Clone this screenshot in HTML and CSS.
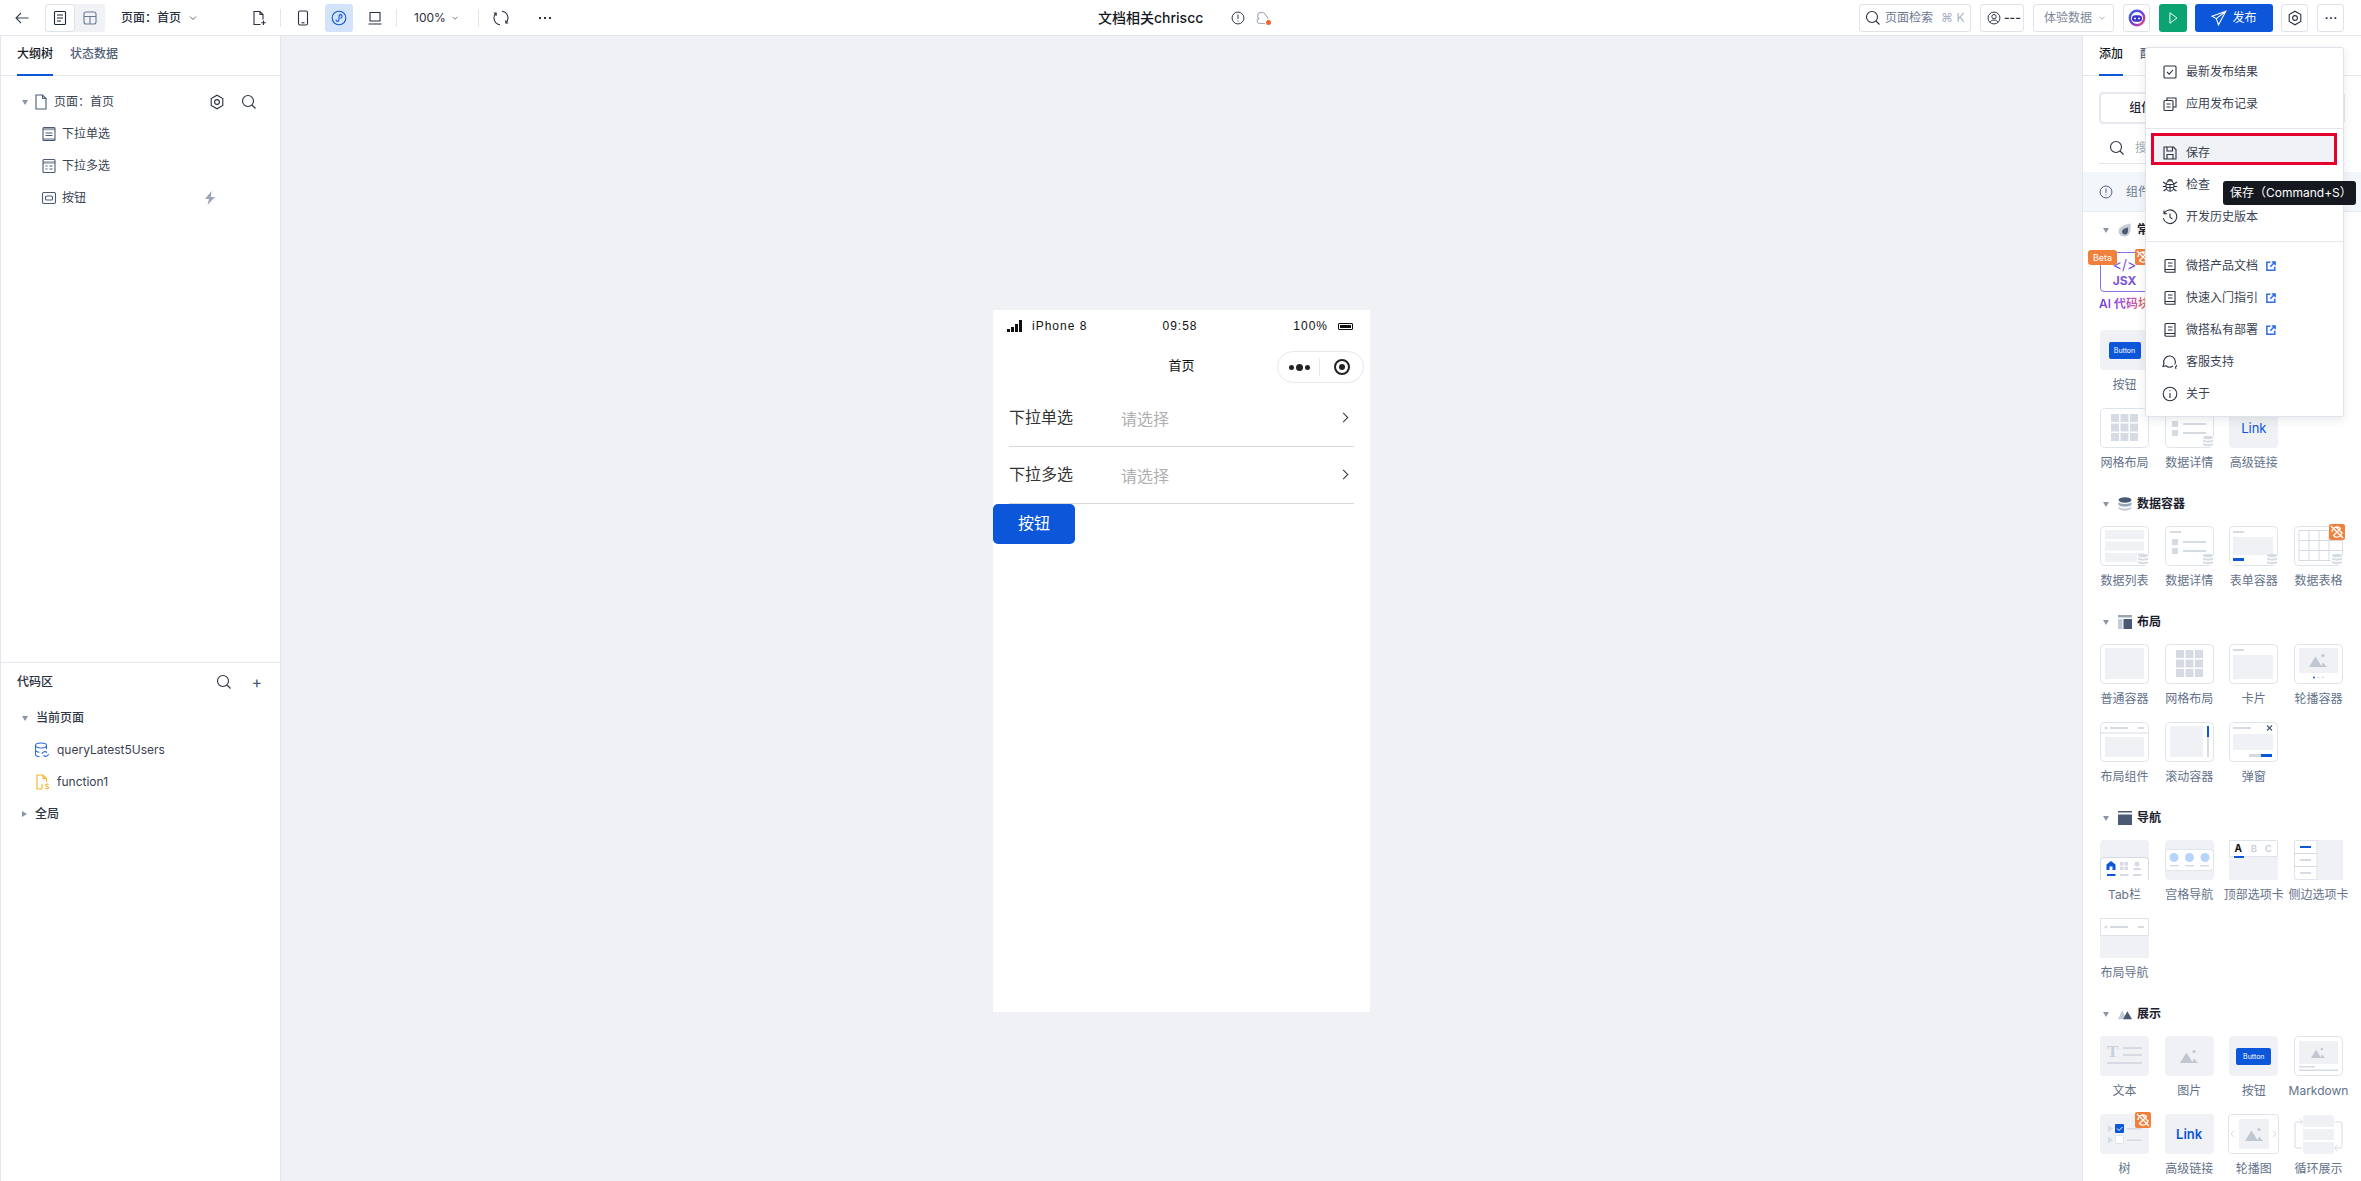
FILE: index.html
```html
<!DOCTYPE html>
<html lang="zh-CN">
<head>
<meta charset="utf-8">
<title>微搭编辑器</title>
<link rel="stylesheet" href="styles.css">
</head>
<body>
<svg class="defs" aria-hidden="true">
  <defs>
    <linearGradient id="ai-ring" x1="0" y1="0" x2="1" y2="1"><stop offset="0" stop-color="#2f62e6"/><stop offset=".55" stop-color="#7a3fe0"/><stop offset="1" stop-color="#e8476a"/></linearGradient>
    <symbol id="i-search" viewBox="0 0 16 16"><circle cx="7" cy="7" r="5.500"/><path d="M11 11l3.500 3.500"/></symbol>
    <symbol id="i-chev" viewBox="0 0 16 16"><path d="M4 6l4 4 4-4"/></symbol>
    <symbol id="i-back" viewBox="0 0 16 16"><path d="M14.500 8H2M7 3L2 8l5 5"/></symbol>
    <symbol id="i-outline" viewBox="0 0 16 16"><rect x="2.500" y="1.500" width="11" height="13" rx="1"/><path d="M5 5h6M5 8h6M5 11h4"/></symbol>
    <symbol id="i-layout" viewBox="0 0 16 16"><rect x="2" y="2" width="12" height="12" rx="2"/><path d="M2 6.500h12M8 6.500V14"/></symbol>
    <symbol id="i-newfile" viewBox="0 0 16 16"><path d="M9.500 14.500H3v-13h6l3 3v5M9 1.500v3h3M12.500 10.500v4.500M10.300 12.800h4.500"/></symbol>
    <symbol id="i-phone" viewBox="0 0 16 16"><rect x="3.500" y="1" width="9" height="14" rx="1.500"/><path d="M6.500 12.800h3"/></symbol>
    <symbol id="i-mini" viewBox="0 0 16 16"><circle cx="8" cy="8" r="6.800"/><path d="M5 9.500c0 2.500 3 2.500 3 0v-3c0-2.500 3-2.500 3 0 0 1.300-1 1.800-1.800 1.800"/></symbol>
    <symbol id="i-laptop" viewBox="0 0 16 16"><path d="M3 2.500h10v8.500H3zM1.500 14h13"/></symbol>
    <symbol id="i-refresh" viewBox="0 0 16 16"><path d="M9 1.300A6.800 6.800 0 0 1 12.800 13M7 14.700A6.800 6.800 0 0 1 3.200 3M12.800 10.300V13h2.500M3.200 5.700V3H.7"/></symbol>
    <symbol id="i-dots" viewBox="0 0 16 16"><path class="fill" d="M2 7h2v2H2zM7 7h2v2H7zM12 7h2v2h-2z"/></symbol>
    <symbol id="i-gear" viewBox="0 0 16 16"><path d="M8 1.200l5.800 3.300v7L8 14.800l-5.800-3.300v-7z"/><circle cx="8" cy="8" r="2.400"/></symbol>
    <symbol id="i-file" viewBox="0 0 16 16"><path d="M3 1h6.500L13 4.500V15H3zM9.500 1v3.500H13"/></symbol>
    <symbol id="i-select" viewBox="0 0 16 16"><rect x="2" y="1.500" width="12" height="13" rx="1"/><path class="thick" d="M2 3h12M2 13.500h12"/><path d="M4.500 7h7M4.500 9.500h7"/></symbol>
    <symbol id="i-multi" viewBox="0 0 16 16"><rect x="2" y="1.500" width="12" height="13" rx="1"/><path class="thick" d="M2 4.500h12"/><path d="M4.500 8h2M8.500 8h3M4.500 11h2M8.500 11h3"/></symbol>
    <symbol id="i-btn" viewBox="0 0 16 16"><rect x="1.500" y="2.500" width="13" height="11" rx="1.500"/><rect x="4.500" y="6" width="7" height="4" rx="1"/></symbol>
    <symbol id="i-bolt" viewBox="0 0 16 16"><path class="fill" d="M9.500 1L3 9h4l-1.500 6L13 7H8.800z"/></symbol>
    <symbol id="i-info" viewBox="0 0 16 16"><circle cx="8" cy="8" r="6.800"/><path d="M8 4v5M8 10.800v1"/></symbol>
    <symbol id="i-about" viewBox="0 0 16 16"><circle cx="8" cy="8" r="6.800"/><path d="M8 7v5M8 4.200v1"/></symbol>
    <symbol id="i-check" viewBox="0 0 16 16"><rect x="2" y="2" width="12" height="12" rx="1"/><path d="M5 8l2.200 2.200L11 6"/></symbol>
    <symbol id="i-copy" viewBox="0 0 16 16"><path d="M5 4.500V2h9v9h-3"/><rect x="2" y="4.500" width="9" height="10" rx="1"/><path d="M4.500 8h4M4.500 11h4"/></symbol>
    <symbol id="i-save" viewBox="0 0 16 16"><path d="M2 2h9.500L14 4.500V14H2zM5 2v4h5.500V2M5 14V9.500h6V14"/></symbol>
    <symbol id="i-bug" viewBox="0 0 16 16"><ellipse cx="8" cy="9" rx="4" ry="5.300"/><path d="M5.500 4.500C6 2 10 2 10.500 4.500M1 5l3 2M15 5l-3 2M.8 9.500h3.200M15.200 9.500H12M1.500 14l3-2M14.500 14l-3-2M4.500 7.500h7M4.500 10.500h7M8 7.500v6.500"/></symbol>
    <symbol id="i-history" viewBox="0 0 16 16"><path d="M2 4.500A6.800 6.800 0 1 1 1.300 9M2 1.500v3.200h3.200M8 4.500V8.300l2.500 1.800"/></symbol>
    <symbol id="i-book" viewBox="0 0 16 16"><path d="M3 14V2.500A1 1 0 0 1 4 1.500h9v10H4.300A1.300 1.300 0 0 0 3 13a1.300 1.300 0 0 0 1.300 1.300H13V11.500M6 5h4.500M6 8h4.500"/></symbol>
    <symbol id="i-ext" viewBox="0 0 16 16"><path d="M7 3H2.500v10.500H13V9M7 9l6-6M9 2.500h4.500V7"/></symbol>
    <symbol id="i-chat" viewBox="0 0 16 16"><path d="M12.700 10.500A5.800 5.800 0 1 0 2 9.500L1 12.500l3-.7a5.800 5.800 0 0 0 7 .2"/><path d="M14.500 11c0 1-.5 1.800-1 2.300l.5 1.500"/></symbol>
    <symbol id="i-send" viewBox="0 0 16 16"><path d="M14.800 1.200L1 6.200l4.300 2.400L7.500 14.800zM14.800 1.200L5.300 8.600"/></symbol>
    <symbol id="i-play" viewBox="0 0 16 16"><path d="M4.500 2l8 6-8 6z"/></symbol>
    <symbol id="i-user" viewBox="0 0 16 16"><circle cx="8" cy="8" r="6.800"/><circle cx="8" cy="6.500" r="2.500"/><path d="M3.500 13c1-3.500 8-3.500 9 0"/></symbol>
    <symbol id="i-cloud" viewBox="0 0 16 16"><path d="M9 13.500H3.500a2.500 2.500 0 0 1-.6-4.900A3.500 3.500 0 0 1 6 2.500a3.500 3.500 0 0 1 3.500 2.200c.6 1 2 2.700 2.800 4"/></symbol>
    <symbol id="i-ai" viewBox="0 0 18 18"><circle cx="9" cy="9" r="7.200" fill="none" stroke="url(#ai-ring)" stroke-width="2.400"/><rect x="4" y="6.200" width="10" height="6.600" rx="3.300" fill="#3b2fd0"/><circle cx="7" cy="9.500" r="1" fill="#fff"/><circle cx="11" cy="9.500" r="1" fill="#fff"/></symbol>

    <symbol id="s-drop" viewBox="0 0 14 14"><path fill="#c5ccd6" d="M12.500 .5C13 6 13 13.500 6.500 13.500 2.500 13.500.5 10.500.5 8 .5 4 7 1.500 12.500.5z"/><path fill="#4a5a75" d="M10 4.500c.3 3.500 0 7-3 7-2 0-3-1.500-3-3 0-2 3-3.300 6-4z"/></symbol>
    <symbol id="s-db" viewBox="0 0 14 14"><ellipse fill="#4a5a75" cx="7" cy="3" rx="6.500" ry="2.800"/><path fill="#9aa5b6" d="M.5 5c1 2.500 12 2.500 13 0v2.500c-1 3-12 3-13 0z"/><path fill="#c5ccd6" d="M.5 9.500c1 2.500 12 2.500 13 0v1.500c-1 3.500-12 3.500-13 0z"/></symbol>
    <symbol id="s-lay" viewBox="0 0 14 14"><path fill="#9aa5b6" d="M0 0h14v2.500H0z"/><path fill="#c5ccd6" d="M0 4h4.500v10H0z"/><path fill="#4a5a75" d="M5.500 4H14v10H5.500z"/></symbol>
    <symbol id="s-nav" viewBox="0 0 14 14"><path fill="#4a5a75" d="M0 0h14v1.500H0zM0 3.500h14V14H0z"/></symbol>
    <symbol id="s-show" viewBox="0 0 15 14"><path fill="#c5ccd6" d="M0 12.500L4.500 3l4.500 9.500z"/><path fill="#4a5a75" d="M5.500 12.500L10 4l5 8.500z"/></symbol>

    <symbol id="d-badge" viewBox="0 0 12 12"><path class="w" d="M0 2h12v10H0z"/><ellipse class="m" cx="6" cy="2.500" rx="5" ry="1.800"/><path class="m" d="M1 4.500c1.500 1.500 8.500 1.500 10 0v2c-1.500 1.500-8.500 1.500-10 0zM1 8c1.500 1.500 8.500 1.500 10 0v2c-1.500 1.500-8.500 1.500-10 0z"/></symbol>
    <symbol id="d-mtn" viewBox="0 0 18 14"><path class="mt" d="M0 14L6.500 3.500 13 14zM12 14l2-4.500 4 4.500z"/><circle class="mt" cx="14" cy="2.500" r="1.600"/></symbol>
    <symbol id="d-link" viewBox="0 0 16 16"><rect width="16" height="16" rx="2" fill="#f0803c"/><path d="M3 8a5 5 0 0 1 8-4M13 8a5 5 0 0 1-8 4M2 2l12 12M4 12l8-8M7 3l6 6" fill="none" stroke="#fff" stroke-width="1.300"/></symbol>

    <symbol id="t-grid" viewBox="0 0 49 40"><rect class="o" x=".5" y=".5" width="48" height="39" rx="4"/><path class="m" d="M11 6h8v8h-8zM20.500 6h8v8h-8zM30 6h8v8h-8zM11 15.500h8v8h-8zM20.500 15.500h8v8h-8zM30 15.500h8v8h-8zM11 25h8v8h-8zM20.500 25h8v8h-8zM30 25h8v8h-8z"/></symbol>
    <symbol id="t-detail" viewBox="0 0 49 40"><rect class="o" x=".5" y=".5" width="48" height="39" rx="4"/><path class="m" d="M5 5h11v2H5zM7 13h6v6H7zM7 22h6v6H7zM18 15h23v2H18zM18 24h23v2H18z"/><use href="#d-badge" x="37" y="27" width="12" height="12"/></symbol>
    <symbol id="t-list" viewBox="0 0 49 40"><rect class="o" x=".5" y=".5" width="48" height="39" rx="4"/><path class="g" d="M5 4h39v9H5zM5 15.500h39v9H5zM5 27h39v9H5z"/><use href="#d-badge" x="37" y="27" width="12" height="12"/></symbol>
    <symbol id="t-form" viewBox="0 0 49 40"><rect class="o" x=".5" y=".5" width="48" height="39" rx="4"/><path class="m" d="M4 5h11v2H4z"/><path class="g" d="M4 11h40v18H4z"/><path class="b" d="M4 32h11v3H4z"/><use href="#d-badge" x="37" y="27" width="12" height="12"/></symbol>
    <symbol id="t-table" viewBox="0 0 49 40"><rect class="o" x=".5" y=".5" width="48" height="39" rx="4"/><path class="l" d="M5 4.500h44v30H5zM5 14.500h44M5 24.500h44M15 4.500v30M25 4.500v30M35 4.500v30"/><use href="#d-badge" x="37" y="27" width="12" height="12"/></symbol>
    <symbol id="t-box" viewBox="0 0 49 40"><rect class="o" x=".5" y=".5" width="48" height="39" rx="4"/><path class="g" d="M5 4h39v31H5z"/></symbol>
    <symbol id="t-card" viewBox="0 0 49 40"><rect class="o" x=".5" y=".5" width="48" height="39" rx="4"/><path class="m" d="M4 5h11v2H4z"/><path class="g" d="M4 11h40v24H4z"/></symbol>
    <symbol id="t-swiper" viewBox="0 0 49 40"><rect class="o" x=".5" y=".5" width="48" height="39" rx="4"/><path class="g" d="M5 4h39v25H5z"/><use href="#d-mtn" x="15" y="9" width="18" height="14"/><circle class="b" cx="20" cy="33.500" r="1"/><circle class="m" cx="24.500" cy="33.500" r="1"/><circle class="m" cx="29" cy="33.500" r="1"/></symbol>
    <symbol id="t-bar" viewBox="0 0 49 40"><rect class="o" x=".5" y=".5" width="48" height="39" rx="4"/><path class="l" d="M.5 11h48"/><circle class="m" cx="6" cy="6" r="1.500"/><path class="m" d="M10 5h18v2H10zM38 5h6v2h-6z"/><path class="g" d="M5 15h39v20H5z"/></symbol>
    <symbol id="t-scroll" viewBox="0 0 49 40"><rect class="o" x=".5" y=".5" width="48" height="39" rx="4"/><path class="g" d="M5 4h33v31H5z"/><path class="m" d="M42 15h2v20h-2z"/><path class="b" d="M42 4h2v11h-2z"/></symbol>
    <symbol id="t-modal" viewBox="0 0 49 40"><rect class="o" x=".5" y=".5" width="48" height="39" rx="4"/><path class="m" d="M4 5h18v2H4z"/><path class="x" d="M38 3.500l5 5M43 3.500l-5 5"/><path class="g" d="M4 12h40v16H4z"/><path class="m" d="M20 32h12v3H20z"/><path class="b" d="M32 32h11v3H32z"/></symbol>
    <symbol id="t-tab" viewBox="0 0 49 40"><rect class="g" width="49" height="40" rx="4"/><path class="w" d="M1 40V21a3 3 0 0 1 3-3h41a3 3 0 0 1 3 3v19z"/><path class="l" d="M.5 40V21A3.500 3.500 0 0 1 4 17.500h41A3.500 3.500 0 0 1 48.500 21v19"/><path class="b" d="M6.500 30v-5.500L11 21l4.500 3.500V30h-3v-3.500h-3V30z"/><path class="b" d="M7 34h8.500v2H7z"/><path class="m" d="M20 22h3.500v3.500H20zM24.500 22H28v3.500h-3.500zM20 26.500h3.500V30H20zM24.500 26.500H28V30h-3.500zM20 34h8.500v2H20zM33 34h8.500v2H33zM33 30c0-3 8.500-3 8.500 0z"/><circle class="m" cx="37" cy="24" r="2.500"/></symbol>
    <symbol id="t-gong" viewBox="0 0 49 40"><rect class="g" width="49" height="40" rx="4"/><rect class="o" x=".5" y="9.500" width="48" height="21" rx="3"/><circle class="c" cx="9" cy="17.500" r="4.500"/><circle class="c" cx="24.500" cy="17.500" r="4.500"/><circle class="c" cx="40" cy="17.500" r="4.500"/><path class="m" d="M5 25h9v1.500H5zM20 25h9v1.500h-9zM35 25h9v1.500h-9z"/></symbol>
    <symbol id="t-top" viewBox="0 0 49 40"><path class="g" d="M0 0h49v40H0z"/><path class="o" d="M.5.500h47a1 1 0 0 1 1 1v15H.5z"/><text class="ta" x="5.500" y="12">A</text><text class="tb" x="22" y="12">B</text><text class="tb" x="36" y="12">C</text><path class="b" d="M5 16h10v2H5z"/></symbol>
    <symbol id="t-side" viewBox="0 0 49 40"><path class="g" d="M0 0h49v40H0z"/><path class="o" d="M.5 1.500a1 1 0 0 1 1-1h21.500v39H3.500a3 3 0 0 1-3-3z"/><path class="l" d="M.5 13.500H23M.5 26.500H23"/><path class="b" d="M6 6h11v2H6z"/><path class="m" d="M6 19h11v2H6zM6 32h11v2H6z"/></symbol>
    <symbol id="t-nav" viewBox="0 0 49 40"><path class="g" d="M0 0h49v40H0z"/><path class="o" d="M.5.500h48v17H.5z"/><circle class="m" cx="6" cy="9" r="1.500"/><path class="m" d="M10 8h18v2H10zM38 8h6v2h-6z"/></symbol>
    <symbol id="t-text" viewBox="0 0 49 40"><rect class="g" width="49" height="40" rx="4"/><text class="tt" x="7" y="21">T</text><path class="m" d="M23 11h19v2H23zM23 18h19v2H23zM7 26h35v2H7z"/></symbol>
    <symbol id="t-img" viewBox="0 0 49 40"><rect class="g" width="49" height="40" rx="4"/><use href="#d-mtn" x="15" y="13" width="18" height="14"/></symbol>
    <symbol id="t-md" viewBox="0 0 49 40"><rect class="o" x=".5" y=".5" width="48" height="39" rx="4"/><path class="g" d="M5 5h39v23H5z"/><use href="#d-mtn" x="17" y="11" width="14" height="11"/><path class="m" d="M5 30h16v1.500H5zM5 33.500h39V35H5z"/></symbol>
    <symbol id="t-tree" viewBox="0 0 49 40"><rect class="g" width="49" height="40" rx="4"/><path class="m" d="M8 11l5 3.500L8 18zM8 22.500l5 3.500-5 3.500z"/><rect class="b" x="15" y="10" width="9" height="9" rx="1"/><path class="ck" d="M17 14.500l2 2 3.500-3.500"/><rect class="o" x="15.500" y="21.500" width="8" height="8" rx="1"/><path class="m" d="M27 14h15v1.500H27zM27 25.500h15V27H27z"/></symbol>
    <symbol id="t-car" viewBox="0 0 51 40"><rect class="o" x=".5" y=".5" width="50" height="39" rx="3"/><path class="g" d="M11 5h30v30H11z"/><use href="#d-mtn" x="17" y="13" width="18" height="14"/><path class="l" d="M6 17l-3 3 3 3M45 17l3 3-3 3"/></symbol>
    <symbol id="t-loop" viewBox="0 0 49 40"><path class="g" d="M9 4a3 3 0 0 1 3-3h25a3 3 0 0 1 3 3v9H9zM9 15h31v11H9zM9 28h31v9a3 3 0 0 1-3 3H12a3 3 0 0 1-3-3z"/><path class="l" d="M8 8H3a2 2 0 0 0-2 2v22a2 2 0 0 0 2 2h5M41 8h5a2 2 0 0 1 2 2v22a2 2 0 0 1-2 2h-5M6 5l2.500 3L6 10M43 31l-2.500 3L43 37"/></symbol>
  </defs>
</svg>

<header class="topbar">
  <div class="tb-left">
    <span class="tb-back"><svg class="ic i16"><use href="#i-back"/></svg></span>
    <div class="view-toggle">
      <span class="view-btn on"><svg class="ic i16"><use href="#i-outline"/></svg></span>
      <span class="view-btn muted"><svg class="ic i16"><use href="#i-layout"/></svg></span>
    </div>
    <div class="page-pick"><span>页面：首页</span><svg class="ic i12"><use href="#i-chev"/></svg></div>
    <span class="cell"><svg class="ic i16"><use href="#i-newfile"/></svg></span>
    <i class="divider"></i>
    <div class="devices">
      <span class="cell"><svg class="ic i16"><use href="#i-phone"/></svg></span>
      <span class="cell active"><svg class="ic i16"><use href="#i-mini"/></svg></span>
      <span class="cell"><svg class="ic i16"><use href="#i-laptop"/></svg></span>
    </div>
    <i class="divider"></i>
    <div class="zoom-pick"><span>100%</span><svg class="ic i10"><use href="#i-chev"/></svg></div>
    <i class="divider"></i>
    <div class="tb-tools">
      <span class="cell"><svg class="ic i16"><use href="#i-refresh"/></svg></span>
      <span class="cell"><svg class="ic i16"><use href="#i-dots"/></svg></span>
    </div>
  </div>
  <div class="tb-mid">
    <strong class="app-name">文档相关chriscc</strong>
    <svg class="ic i14 info-ic"><use href="#i-info"/></svg>
    <span class="cloud"><svg class="ic i16"><use href="#i-cloud"/></svg><i class="cloud-dot"></i></span>
  </div>
  <div class="tb-right">
    <div class="box page-search"><svg class="ic i16"><use href="#i-search"/></svg><span class="ps-text">页面检索</span><span class="ps-key">⌘ K</span></div>
    <div class="box user-box"><svg class="ic i14"><use href="#i-user"/></svg><span>---</span></div>
    <div class="box data-box"><span>体验数据</span><svg class="ic i10"><use href="#i-chev"/></svg></div>
    <div class="box sq narrow"><svg class="ai-ic"><use href="#i-ai"/></svg></div>
    <div class="sq run-btn"><svg class="ic i14"><use href="#i-play"/></svg></div>
    <div class="publish"><svg class="ic i16"><use href="#i-send"/></svg><span>发布</span></div>
    <div class="box sq narrow"><svg class="ic i16"><use href="#i-gear"/></svg></div>
    <div class="box sq narrow"><svg class="ic i14"><use href="#i-dots"/></svg></div>
  </div>
</header>

<main class="workspace">
  <aside class="left">
    <nav class="tabs">
      <span class="tab cur">大纲树</span><span class="tab">状态数据</span>
    </nav>
    <div class="tree">
      <div class="row row-root">
        <i class="tri"></i>
        <svg class="ic i16 slate"><use href="#i-file"/></svg>
        <span class="row-text">页面：首页</span>
        <span class="row-tools"><svg class="ic i16 dark"><use href="#i-gear"/></svg><svg class="ic i16 dark"><use href="#i-search"/></svg></span>
      </div>
      <div class="row row-child"><svg class="ic i16 slate"><use href="#i-select"/></svg><span class="row-text">下拉单选</span></div>
      <div class="row row-child"><svg class="ic i16 slate"><use href="#i-multi"/></svg><span class="row-text">下拉多选</span></div>
      <div class="row row-child"><svg class="ic i16 slate"><use href="#i-btn"/></svg><span class="row-text">按钮</span><svg class="ic i16 bolt"><use href="#i-bolt"/></svg></div>
    </div>
    <div class="code">
      <div class="code-h"><span>代码区</span><span class="row-tools code-tools"><svg class="ic i16 dark"><use href="#i-search"/></svg><b class="plus">+</b></span></div>
      <div class="row code-group"><i class="tri"></i><span>当前页面</span></div>
      <div class="row code-item">
        <svg class="file-ic" viewBox="0 0 16 16"><ellipse cx="7" cy="3.500" rx="5.500" ry="2.500"/><path d="M1.500 3.500v9c0 1 2 2 4 2.300M1.500 8c0 1 2 2 4 2.300M12.500 3.500V7M8 12a3 3 0 0 1 5-1.500M14.500 12a3 3 0 0 1-5 1.500"/></svg>
        <span class="row-text">queryLatest5Users</span></div>
      <div class="row code-item">
        <svg class="file-ic js" viewBox="0 0 16 16"><path d="M6 15H3V1h6l3.500 3.500V8M9 1v3.500h3.500M8 10v4c0 1-1 1.300-2 .8M14.500 10.500c-1-.8-3-.5-2.800.8.200 1.300 3 1 2.900 2.400-.1 1.200-2.200 1.300-3.200.5"/></svg>
        <span class="row-text">function1</span></div>
      <div class="row code-group"><i class="tri side"></i><span>全局</span></div>
    </div>
  </aside>

  <section class="canvas">
    <div class="phone">
      <div class="status">
        <span class="st-left"><span class="signal"><i></i><i></i><i></i><i></i></span>iPhone 8</span>
        <span class="st-time">09:58</span>
        <span class="st-right">100%<span class="battery"><i></i></span></span>
      </div>
      <div class="navbar">
        <span class="nav-title">首页</span>
        <span class="capsule">
          <span class="cap-dots"><i></i><i class="big"></i><i></i></span>
          <i class="cap-line"></i>
          <span class="cap-rec"><i></i></span>
        </span>
      </div>
      <div class="field"><span class="f-label">下拉单选</span><span class="f-ph">请选择</span><i class="f-arrow"></i></div>
      <div class="field"><span class="f-label">下拉多选</span><span class="f-ph">请选择</span><i class="f-arrow"></i></div>
      <div class="ph-btn">按钮</div>
    </div>
  </section>

  <aside class="right">
    <nav class="tabs right-tabs">
      <span class="tab cur">添加</span><span class="tab">配置</span>
    </nav>
    <div class="segment"><span class="seg-on">组件</span><span class="seg-off"></span><span class="seg-off"></span></div>
    <div class="r-search"><svg class="ic i16 dark"><use href="#i-search"/></svg><span>搜索</span></div>
    <div class="notice"><svg class="ic i14 slate"><use href="#i-info"/></svg><span>组件</span></div>

    <div class="sec">
      <div class="sec-h"><i class="tri"></i><svg class="sec-svg"><use href="#s-drop"/></svg><span>常</span></div>
      <div class="tiles">
        <div class="tile">
          <div class="jsx"><span class="jsx-code">&lt;/&gt;</span><span class="jsx-name">JSX</span><em class="beta">Beta</em><svg class="lnk jsx-lnk"><use href="#d-link"/></svg></div>
          <span class="tile-l ai-l">AI 代码块</span>
        </div>
        <div class="tile"></div><div class="tile"></div><div class="tile"></div>
        <div class="tile"><div class="art g-tile"><span class="mini-btn">Button</span></div><span class="tile-l">按钮</span></div>
        <div class="tile"></div><div class="tile"></div><div class="tile"></div>
        <div class="tile"><svg class="art"><use href="#t-grid"/></svg><span class="tile-l">网格布局</span></div>
        <div class="tile"><svg class="art"><use href="#t-detail"/></svg><span class="tile-l">数据详情</span></div>
        <div class="tile"><div class="art g-tile"><span class="mini-link thin">Link</span></div><span class="tile-l">高级链接</span></div>
      </div>
    </div>

    <div class="sec">
      <div class="sec-h"><i class="tri"></i><svg class="sec-svg"><use href="#s-db"/></svg><span>数据容器</span></div>
      <div class="tiles">
        <div class="tile"><svg class="art"><use href="#t-list"/></svg><span class="tile-l">数据列表</span></div>
        <div class="tile"><svg class="art"><use href="#t-detail"/></svg><span class="tile-l">数据详情</span></div>
        <div class="tile"><svg class="art"><use href="#t-form"/></svg><span class="tile-l">表单容器</span></div>
        <div class="tile"><svg class="art"><use href="#t-table"/></svg><svg class="lnk"><use href="#d-link"/></svg><span class="tile-l">数据表格</span></div>
      </div>
    </div>

    <div class="sec">
      <div class="sec-h"><i class="tri"></i><svg class="sec-svg"><use href="#s-lay"/></svg><span>布局</span></div>
      <div class="tiles">
        <div class="tile"><svg class="art"><use href="#t-box"/></svg><span class="tile-l">普通容器</span></div>
        <div class="tile"><svg class="art"><use href="#t-grid"/></svg><span class="tile-l">网格布局</span></div>
        <div class="tile"><svg class="art"><use href="#t-card"/></svg><span class="tile-l">卡片</span></div>
        <div class="tile"><svg class="art"><use href="#t-swiper"/></svg><span class="tile-l">轮播容器</span></div>
        <div class="tile"><svg class="art"><use href="#t-bar"/></svg><span class="tile-l">布局组件</span></div>
        <div class="tile"><svg class="art"><use href="#t-scroll"/></svg><span class="tile-l">滚动容器</span></div>
        <div class="tile"><svg class="art"><use href="#t-modal"/></svg><span class="tile-l">弹窗</span></div>
      </div>
    </div>

    <div class="sec">
      <div class="sec-h"><i class="tri"></i><svg class="sec-svg"><use href="#s-nav"/></svg><span>导航</span></div>
      <div class="tiles">
        <div class="tile"><svg class="art"><use href="#t-tab"/></svg><span class="tile-l">Tab栏</span></div>
        <div class="tile"><svg class="art"><use href="#t-gong"/></svg><span class="tile-l">宫格导航</span></div>
        <div class="tile"><svg class="art"><use href="#t-top"/></svg><span class="tile-l">顶部选项卡</span></div>
        <div class="tile"><svg class="art"><use href="#t-side"/></svg><span class="tile-l">侧边选项卡</span></div>
        <div class="tile"><svg class="art"><use href="#t-nav"/></svg><span class="tile-l">布局导航</span></div>
      </div>
    </div>

    <div class="sec">
      <div class="sec-h"><i class="tri"></i><svg class="sec-svg"><use href="#s-show"/></svg><span>展示</span></div>
      <div class="tiles">
        <div class="tile"><svg class="art"><use href="#t-text"/></svg><span class="tile-l">文本</span></div>
        <div class="tile"><svg class="art"><use href="#t-img"/></svg><span class="tile-l">图片</span></div>
        <div class="tile"><div class="art g-tile"><span class="mini-btn big">Button</span></div><span class="tile-l">按钮</span></div>
        <div class="tile"><svg class="art"><use href="#t-md"/></svg><span class="tile-l">Markdown</span></div>
        <div class="tile"><svg class="art"><use href="#t-tree"/></svg><svg class="lnk"><use href="#d-link"/></svg><span class="tile-l">树</span></div>
        <div class="tile"><div class="art g-tile"><span class="mini-link">Link</span></div><span class="tile-l">高级链接</span></div>
        <div class="tile"><svg class="art wide"><use href="#t-car"/></svg><span class="tile-l">轮播图</span></div>
        <div class="tile"><svg class="art"><use href="#t-loop"/></svg><span class="tile-l">循环展示</span></div>
      </div>
    </div>
  </aside>
</main>

<div class="menu">
  <div class="mark"></div>
  <div class="m-item"><svg class="ic i16"><use href="#i-check"/></svg><span>最新发布结果</span></div>
  <div class="m-item"><svg class="ic i16"><use href="#i-copy"/></svg><span>应用发布记录</span></div>
  <hr class="m-sep">
  <div class="m-item"><svg class="ic i16"><use href="#i-save"/></svg><span>保存</span></div>
  <div class="m-item"><svg class="ic i16"><use href="#i-bug"/></svg><span>检查</span></div>
  <div class="m-item"><svg class="ic i16"><use href="#i-history"/></svg><span>开发历史版本</span></div>
  <hr class="m-sep">
  <div class="m-item"><svg class="ic i16"><use href="#i-book"/></svg><span>微搭产品文档</span><svg class="ic ext"><use href="#i-ext"/></svg></div>
  <div class="m-item"><svg class="ic i16"><use href="#i-book"/></svg><span>快速入门指引</span><svg class="ic ext"><use href="#i-ext"/></svg></div>
  <div class="m-item"><svg class="ic i16"><use href="#i-book"/></svg><span>微搭私有部署</span><svg class="ic ext"><use href="#i-ext"/></svg></div>
  <div class="m-item"><svg class="ic i16"><use href="#i-chat"/></svg><span>客服支持</span></div>
  <div class="m-item"><svg class="ic i16"><use href="#i-about"/></svg><span>关于</span></div>
</div>
<div class="tooltip">保存（Command+S）</div>
</body>
</html>
```

FILE: styles.css
```css
* { box-sizing: border-box; }
html, body { margin: 0; height: 100%; }
body {
  position: relative;
  width: 2361px;
  height: 1181px;
  overflow: hidden;
  display: flex;
  flex-direction: column;
  background: #fff;
  color: #1f2633;
  font: 12px/18px Inter, "Noto Sans CJK SC", sans-serif;
}
.defs { position: absolute; width: 0; height: 0; }
i, em { font-style: normal; }

/* icons */
.ic { fill: none; stroke: currentColor; stroke-width: 1.1; flex: none; display: block; }
.fill { fill: currentColor; stroke: none; }
.thick { stroke-width: 2.4; opacity: .55; }
.i16 { width: 16px; height: 16px; }
.i14 { width: 14px; height: 14px; }
.i12 { width: 12px; height: 12px; }
.i10 { width: 10px; height: 10px; }
.slate { color: #4a5a75; }
.dark { color: #2a3140; }

/* art classes in tile symbols */
.o { fill: #fff; stroke: #dfe3ea; stroke-width: 1; }
.g { fill: #eff1f4; }
.m { fill: #d6dbe3; }
.w { fill: #fff; }
.b { fill: #0b56d9; }
.c { fill: #b7d4fb; }
.l { fill: none; stroke: #d6dbe3; stroke-width: 1; }
.x { fill: none; stroke: #4a5a75; stroke-width: 1.2; }
.ck { fill: none; stroke: #fff; stroke-width: 1; }
.mt { fill: #c0c7d1; }
.ta { font: 700 10px Inter, sans-serif; fill: #111; }
.tb { font: 600 9px Inter, sans-serif; fill: #c5ccd6; }
.tt { font: 700 17px "Liberation Serif", serif; fill: #c9cfd8; }

/* top bar */
.topbar {
  flex: none;
  height: 36px;
  display: flex;
  align-items: center;
  border-bottom: 1px solid #e3e6ec;
  background: #fff;
}
.tb-left { width: 1098px; flex: none; display: flex; align-items: center; }
.tb-back { margin-left: 14px; color: #3a4252; }
.view-toggle { margin-left: 15px; display: flex; background: #f0f2f5; border-radius: 3px; height: 28px; }
.view-btn { width: 30px; height: 28px; display: flex; align-items: center; justify-content: center; }
.view-btn.on { background: #fff; border: 1px solid #dfe3ea; border-radius: 3px; }
.view-btn.muted { color: #6b7a90; }
.page-pick { margin-left: 16px; width: 124px; display: flex; align-items: center; gap: 6px; font-weight: 500; color: #2a3140; }
.page-pick .ic { color: #3a4252; }
.cell { width: 28px; height: 28px; display: flex; align-items: center; justify-content: center; border-radius: 3px; color: #2a3140; }
.cell.active { background: #d4e3fc; color: #0b56d9; }
.divider { width: 1px; height: 18px; background: #e3e6ec; margin: 0 8px 0 7px; flex: none; }
.devices { display: flex; gap: 8px; }
.zoom-pick { width: 66px; padding-left: 9px; display: flex; align-items: center; gap: 4px; color: #2a3140; }
.zoom-pick .ic { color: #3a4252; }
.tb-tools { display: flex; gap: 16px; }
.tb-mid { display: flex; align-items: center; }
.app-name { font-size: 14px; font-weight: 500; color: #141a24; }
.info-ic { margin-left: 28px; color: #2a3140; }
.cloud { position: relative; margin-left: 11px; color: #a4adbb; }
.cloud-dot { position: absolute; right: 1px; bottom: 1px; width: 5px; height: 5px; border-radius: 50%; background: #f0642f; }
.tb-right { margin-left: auto; padding-right: 17px; display: flex; align-items: center; gap: 9px; }
.box {
  height: 28px;
  display: flex;
  align-items: center;
  border: 1px solid #dfe3ea;
  border-radius: 3px;
  background: #fff;
  color: #2a3140;
}
.sq { width: 28px; justify-content: center; display: flex; align-items: center; height: 28px; border-radius: 3px; }
.sq.narrow { width: 27px; }
.ai-ic { width: 18px; height: 18px; display: block; }
.page-search { width: 112px; padding-left: 5px; color: #2a3140; }
.ps-text { margin-left: 4px; color: #6b7a90; }
.ps-key { margin-left: 8px; color: #aab2bf; white-space: nowrap; }
.user-box { width: 44px; padding-left: 6px; gap: 3px; font-weight: 600; }
.data-box { width: 81px; padding-left: 10px; gap: 5px; color: #7c8799; }
.run-btn { background: #0ba371; color: #fff; }
.publish { width: 78px; height: 28px; margin: 0 -1px; display: flex; align-items: center; justify-content: center; gap: 5px; background: #0b56d9; border-radius: 3px; color: #fff; }

/* workspace */
.workspace { flex: 1; min-height: 0; display: flex; }
.left { width: 281px; flex: none; display: flex; flex-direction: column; border-left: 1px solid #e3e6ec; border-right: 1px solid #e3e6ec; }
.tabs { height: 40px; padding-left: 16px; display: flex; gap: 17px; border-bottom: 1px solid #e3e6ec; }
.tab { height: 40px; line-height: 36px; font-weight: 500; color: #52617a; }
.tab.cur { color: #141a24; border-bottom: 2px solid #0b56d9; }
.tree { flex: 1; padding-top: 10px; }
.row { height: 32px; display: flex; align-items: center; color: #2f3746; }
.row-root { padding-left: 21px; gap: 5px; }
.row-child { padding-left: 40px; gap: 5px; position: relative; }
.row-text { color: #3a4252; }
.row-tools { margin-left: auto; margin-right: 23px; display: flex; gap: 16px; }
.bolt { color: #9aa5b6; position: absolute; left: 201px; }
.tri { width: 0; height: 0; border: 3.5px solid transparent; border-top: 5px solid #8a95a8; border-bottom: 0; flex: none; }
.tri.side { border: 3.5px solid transparent; border-left: 5px solid #8a95a8; border-right: 0; }
.code { height: 519px; flex: none; border-top: 1px solid #e3e6ec; padding-top: 3px; }
.code-h { height: 32px; margin-bottom: 4px; padding-left: 16px; display: flex; align-items: center; font-weight: 500; color: #2a3140; }
.code-tools { align-items: center; gap: 19px; margin-right: 18px; }
.plus { font-weight: 400; font-size: 16px; color: #4a5a75; }
.code-group { padding-left: 21px; gap: 8px; font-weight: 500; }
.code-item { padding-left: 33px; gap: 7px; }
.file-ic { width: 16px; height: 16px; fill: none; stroke: #2f6be6; stroke-width: 1.1; flex: none; }
.file-ic.js { stroke: #f5b325; }

/* canvas */
.canvas { flex: 1; background: #eff1f5; display: flex; justify-content: center; padding-top: 274px; }
.phone { width: 377px; height: 702px; background: #fff; font-family: "Liberation Sans", "Noto Sans CJK SC", sans-serif; color: #111; }
.status { height: 32px; padding: 0 17px 0 14px; display: flex; align-items: center; font-size: 12px; letter-spacing: 1px; }
.st-left, .st-right { flex: 1; display: flex; align-items: center; }
.st-right { justify-content: flex-end; }
.signal { display: flex; align-items: flex-end; gap: 1px; height: 12px; margin-right: 10px; }
.signal i { width: 3px; background: #111; }
.signal i:nth-child(1) { height: 3px; }
.signal i:nth-child(2) { height: 5px; }
.signal i:nth-child(3) { height: 8px; }
.signal i:nth-child(4) { height: 12px; }
.battery { width: 15px; height: 7px; margin-left: 10px; padding: 1px; border: 1px solid #111; border-radius: 1px; position: relative; }
.battery i { display: block; width: 100%; height: 100%; background: #111; }
.navbar { height: 46px; margin-bottom: 2px; position: relative; display: flex; align-items: center; justify-content: center; font-size: 13px; }
.nav-title { margin-top: 2px; }
.capsule { position: absolute; left: 284px; top: 9px; width: 87px; height: 32px; border: 1px solid #e6e8ee; border-radius: 16px; display: flex; align-items: center; }
.cap-dots { width: 41px; padding-left: 11px; display: flex; align-items: center; gap: 2px; }
.cap-dots i { width: 5px; height: 5px; border-radius: 50%; background: #222; }
.cap-dots i.big { width: 7px; height: 7px; }
.cap-line { width: 1px; height: 18px; background: #e6e8ee; }
.cap-rec { margin-left: 14px; width: 16px; height: 16px; border: 2px solid #222; border-radius: 50%; display: flex; align-items: center; justify-content: center; }
.cap-rec i { width: 6px; height: 6px; background: #222; border-radius: 50%; }
.field { height: 57px; margin: 0 16px; display: flex; align-items: center; border-bottom: 1px solid #d8d8d8; position: relative; font-size: 16px; color: #333; }
.f-label { width: 112px; padding-left: 0; }
.f-ph { color: #b0b0b0; margin-top: 3px; }
.f-arrow { position: absolute; right: 7px; top: 24px; width: 7px; height: 7px; border-top: 1.2px solid #333; border-right: 1.2px solid #333; transform: rotate(45deg); }
.ph-btn { width: 82px; height: 40px; border-radius: 5px; background: #0b56d9; color: #fff; font-size: 16px; display: flex; align-items: center; justify-content: center; }

/* right panel */
.right { width: 279px; flex: none; border-left: 1px solid #e3e6ec; overflow: hidden; background: #fff; }
.right-tabs { padding-left: 16px; }
.segment { margin: 16px 16px 0; height: 32px; display: flex; background: #e6e9ef; border-radius: 4px; padding: 2px; font-weight: 500; }
.seg-on { flex: 1; background: #fff; border-radius: 3px; display: flex; align-items: center; justify-content: center; }
.seg-off { flex: 1; }
.r-search { height: 32px; margin: 8px 16px 0; padding-left: 10px; display: flex; align-items: center; gap: 10px; color: #a4adbb; border-bottom: 1px solid #e3e6ec; }
.notice { height: 40px; margin-top: 8px; padding-left: 16px; display: flex; align-items: center; gap: 13px; background: #f3f6fb; border-bottom: 1px solid #e8ebf1; color: #6b7a90; }
.sec { margin-top: 8px; }
.sec-h { height: 20px; margin-bottom: 12px; padding-left: 20px; display: flex; align-items: center; font-weight: 600; color: #1a202c; }
.sec-svg { width: 14px; height: 14px; flex: none; margin: 0 5px 0 9px; }
.tiles { display: grid; grid-template-columns: repeat(4, 49px); column-gap: 15.67px; grid-auto-rows: 78px; padding-left: 17px; }
.tile { position: relative; display: flex; flex-direction: column; align-items: center; }
.art { width: 49px; height: 40px; display: block; flex: none; }
.art.wide { width: 51px; margin: 0 -1px; }
.tile-l { margin-top: 6px; white-space: nowrap; color: #64728a; }
.g-tile { background: #eff1f4; border-radius: 4px; display: flex; align-items: center; justify-content: center; }
.mini-btn { width: 32px; height: 17px; background: #0b56d9; border-radius: 2px; color: #fff; font-size: 7px; line-height: 17px; text-align: center; }
.mini-btn.big { width: 35px; }
.mini-link { font-size: 13px; font-weight: 600; color: #0b56d9; }
.mini-link.thin { font-weight: 400; }
.lnk { position: absolute; left: 35px; top: -2px; width: 16px; height: 16px; }
.jsx { position: relative; width: 49px; height: 40px; border: 1px solid #8b6fe0; border-radius: 4px; display: flex; flex-direction: column; align-items: center; color: #7a55d8; font-weight: 700; }
.jsx-code { font-size: 14px; line-height: 16px; font-weight: 400; margin-top: 4px; }
.jsx-name { line-height: 16px; font-size: 12px; }
.beta { position: absolute; left: -13px; top: -3px; width: 29px; height: 15px; background: #f0803c; color: #fff; font: 400 9px/15px Inter, sans-serif; text-align: center; border-radius: 3px; }
.jsx-lnk { left: 34px; top: -4px; }
.ai-l { align-self: flex-start; margin-left: -1px; margin-top: 3px; font-weight: 600; background: linear-gradient(90deg, #6a3fe0, #b04fd0 55%, #f07a3c); -webkit-background-clip: text; background-clip: text; color: transparent; }

/* menu */
.menu { position: absolute; left: 2145px; top: 47px; width: 199px; height: 370px; padding: 8px 0; background: #fff; border: 1px solid #dfe3ea; border-radius: 3px; box-shadow: 0 3px 10px rgba(30, 40, 60, .1); }
.mark { position: absolute; left: 5px; top: 85px; width: 186px; height: 32px; background: #f0f2f5; border: 3px solid #e6002d; }
.m-item { position: relative; height: 32px; padding-left: 16px; display: flex; align-items: center; gap: 8px; color: #3a4252; }
.m-item .i16 { color: #2a3140; }
.ext { width: 12px; height: 12px; margin-left: -1px; color: #2f6be6; stroke-width: 2; }
.m-sep { height: 1px; border: 0; margin: 8px 0; background: #e3e6ec; }
.tooltip { position: absolute; left: 2223px; top: 181px; width: 133px; height: 24px; padding-left: 7px; line-height: 24px; white-space: nowrap; background: #15191f; border-radius: 3px; color: #fff; }
```
